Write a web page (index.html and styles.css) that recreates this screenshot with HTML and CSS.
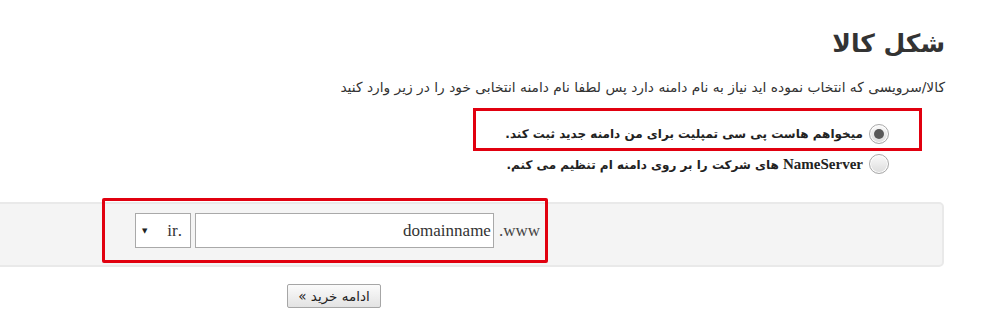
FILE: index.html
```html
<!DOCTYPE html>
<html lang="fa" dir="rtl">
<head>
  <meta charset="UTF-8">
  <title>شکل کالا</title>
  <link rel="stylesheet" href="styles.css">
</head>
<body>
  <div class="page">
    <!-- عنوان -->
    <h1 class="title">شکل کالا</h1>
    <p class="intro">کالا/سرویسی که انتخاب نموده اید نیاز به نام دامنه دارد پس لطفا نام دامنه انتخابی خود را در زیر وارد کنید</p>

    <!-- انتخاب نوع دامنه -->
    <div class="options">
      <label class="option option-marked">
        <input type="radio" name="domainoption" class="radio" checked>
        <span>میخواهم هاست پی سی تمپلیت برای من دامنه جدید ثبت کند.</span>
      </label>
      <label class="option">
        <input type="radio" name="domainoption" class="radio">
        <span><b class="latin">NameServer</b> های شرکت را بر روی دامنه ام تنظیم می کنم.</span>
      </label>
    </div>

    <!-- ورود نام دامنه -->
    <div class="domain-panel">
      <div class="domain-box">
        <span class="prefix">www.</span>
        <input type="text" class="domain-input" value="domainname">
        <div class="tld-select">
          <span class="tld-value">.ir</span>
          <span class="tld-arrow">&#9660;</span>
        </div>
      </div>
    </div>

    <div class="actions">
      <button class="btn">ادامه خرید »</button>
    </div>
  </div>
</body>
</html>
```

FILE: styles.css
```css
/* کلیات صفحه */
body {
  margin: 0;
  background: #ffffff;
  color: #333333;
  font-family: "DejaVu Sans", "Noto Sans", sans-serif;
  overflow: hidden;
}

.page {
  padding-right: 40px;
}

/* عنوان */
.title {
  margin: 23px 0 0;
  font-size: 25px;
  line-height: 42px;
  font-weight: 700;
  color: #333333;
}

.intro {
  margin: 12px 0 0;
  font-size: 13.8px;
  line-height: 20px;
  color: #333333;
}

/* گزینه ها */
.options {
  display: flex;
  flex-direction: column;
  align-items: flex-start;
  margin: 11px 23px 0 0;
}

.option {
  display: flex;
  align-items: center;
  gap: 6px;
  height: 24px;
  padding-right: 33px;
  font-size: 12px;
  font-weight: 700;
  white-space: nowrap;
  color: #222222;
  cursor: pointer;
}

.option-marked {
  box-sizing: border-box;
  width: 449px;
  height: 43px;
  padding: 8px 30px 0 0;
  border: 3px solid #e1000f;
}

.option-marked + .option {
  margin-top: 1px;
}

.latin {
  font-family: "Liberation Serif", serif;
  font-size: 15px;
}

/* دکمه رادیویی */
.radio {
  appearance: none;
  -webkit-appearance: none;
  flex-shrink: 0;
  position: relative;
  width: 20px;
  height: 20px;
  margin: 0;
  border: 1px solid #a9a9a9;
  border-radius: 50%;
  background: linear-gradient(#fafafa, #dcdcdc);
  box-shadow: inset 0 0 0 1px #ffffff;
}

.radio:checked::after {
  content: "";
  position: absolute;
  top: 4px;
  left: 4px;
  width: 10px;
  height: 10px;
  border-radius: 50%;
  background: #595959;
}

/* پنل دامنه */
.domain-panel {
  display: flex;
  margin: 26px 1px 0 -10px;
  height: 61px;
  padding-right: 394px;
  background: #f4f4f4;
  border: 2px solid #e9e9e9;
  border-radius: 5px;
}

.domain-box {
  box-sizing: border-box;
  display: flex;
  align-items: center;
  gap: 4px;
  width: 446px;
  height: 65px;
  margin-top: -6px;
  padding-right: 5px;
  border: 3px solid #e1000f;
  border-radius: 2px;
  font-family: "Liberation Serif", serif;
  font-size: 17px;
  color: #444444;
}

.prefix {
  margin-left: 1px;
}

.domain-input {
  box-sizing: border-box;
  width: 299px;
  height: 35px;
  margin: 0;
  padding: 0 2px;
  border: 1px solid #a9a9a9;
  background: #ffffff;
  font-family: "Liberation Serif", serif;
  font-size: 17px;
  color: #333333;
  text-align: right;
  direction: rtl;
}

.tld-select {
  box-sizing: border-box;
  display: flex;
  align-items: center;
  justify-content: space-between;
  width: 56px;
  height: 35px;
  padding: 0 8px 0 6px;
  border: 1px solid #a9a9a9;
  background: #ffffff;
  color: #333333;
}

.tld-arrow {
  font-family: "DejaVu Sans", sans-serif;
  font-size: 7px;
  color: #222222;
}

/* دکمه ادامه */
.actions {
  display: flex;
  margin: 17px 564px 0 0;
}

.btn {
  box-sizing: border-box;
  width: 94px;
  height: 24px;
  padding: 0;
  border: 1px solid #a6a6a6;
  border-radius: 2px;
  background: linear-gradient(#fbfbfb, #e3e3e3);
  font-family: "DejaVu Sans", sans-serif;
  font-size: 13.5px;
  color: #222222;
  cursor: pointer;
}
```
